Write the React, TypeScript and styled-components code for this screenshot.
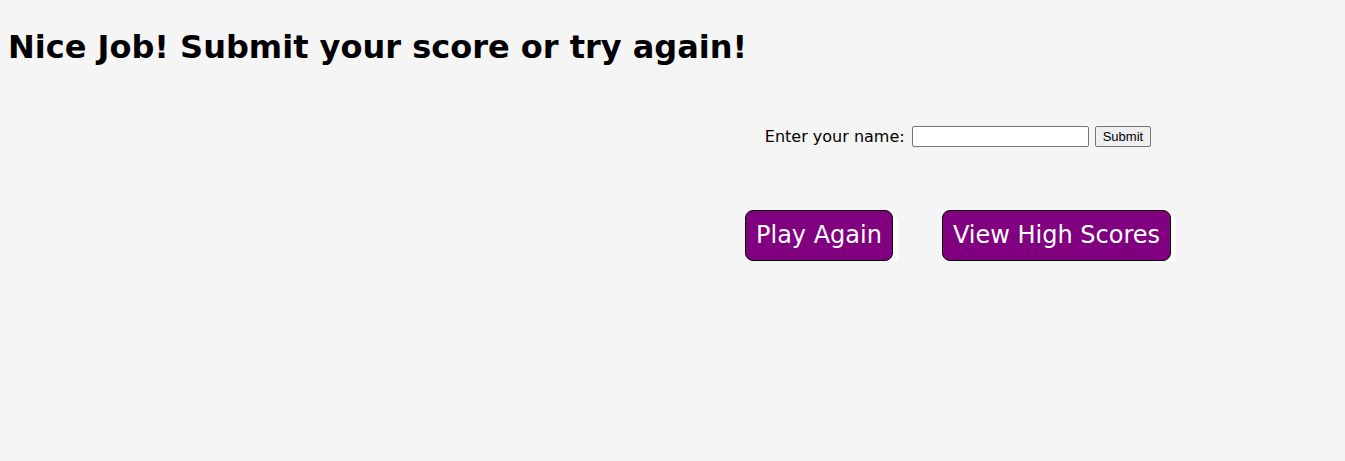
import React from "react";
import styled, { createGlobalStyle } from "styled-components";

const Global = createGlobalStyle`
  html, body { background: #f5f5f5; }
  body { margin: 8px; font-family: "DejaVu Sans", Verdana, sans-serif; color: #000; }
`;

const Title = styled.h1`
  font-size: 32px;
  font-weight: bold;
  margin: 21px 0 0;
  line-height: 37px;
`;

const Stage = styled.div`
  display: flex;
  flex-direction: column;
  align-items: center;
  padding-left: 571px;
  margin-top: 60px;
`;

const Form = styled.form`
  display: flex;
  align-items: center;
  gap: 6px;
  font-size: 16px;
`;

const Label = styled.label`
  font-size: 16px;
  margin-right: 1px;
`;

const NameInput = styled.input`
  width: 177px;
  height: 21px;
  box-sizing: border-box;
  border: 1px solid #767676;
  border-radius: 2px;
  background: #fff;
  padding: 1px 2px;
`;

const SubmitButton = styled.button`
  font-family: "Liberation Sans", Arial, sans-serif;
  font-size: 13px;
  height: 21px;
  padding: 1px 7px;
  border: 1px solid #767676;
  border-radius: 2px;
  background: #efefef;
  color: #000;
`;

const Actions = styled.div`
  display: flex;
  gap: 49px;
  margin-top: 63px;
`;

const ActionButton = styled.button`
  font-family: "DejaVu Sans", Verdana, sans-serif;
  font-size: 24px;
  line-height: 29px;
  color: #fff;
  background: #800080;
  border: 1px solid #000;
  border-radius: 8px;
  padding: 10px 10px;
  box-shadow: 5px 5px 2px #fff;
  cursor: pointer;
`;

export default function App() {
  return (
    <>
      <Global />
      <Title>Nice Job! Submit your score or try again!</Title>
      <Stage>
        <Form onSubmit={(e) => e.preventDefault()}>
          <Label htmlFor="name">Enter your name:</Label>
          <NameInput id="name" type="text" />
          <SubmitButton type="submit">Submit</SubmitButton>
        </Form>
        <Actions>
          <ActionButton>Play Again</ActionButton>
          <ActionButton>View High Scores</ActionButton>
        </Actions>
      </Stage>
    </>
  );
}
